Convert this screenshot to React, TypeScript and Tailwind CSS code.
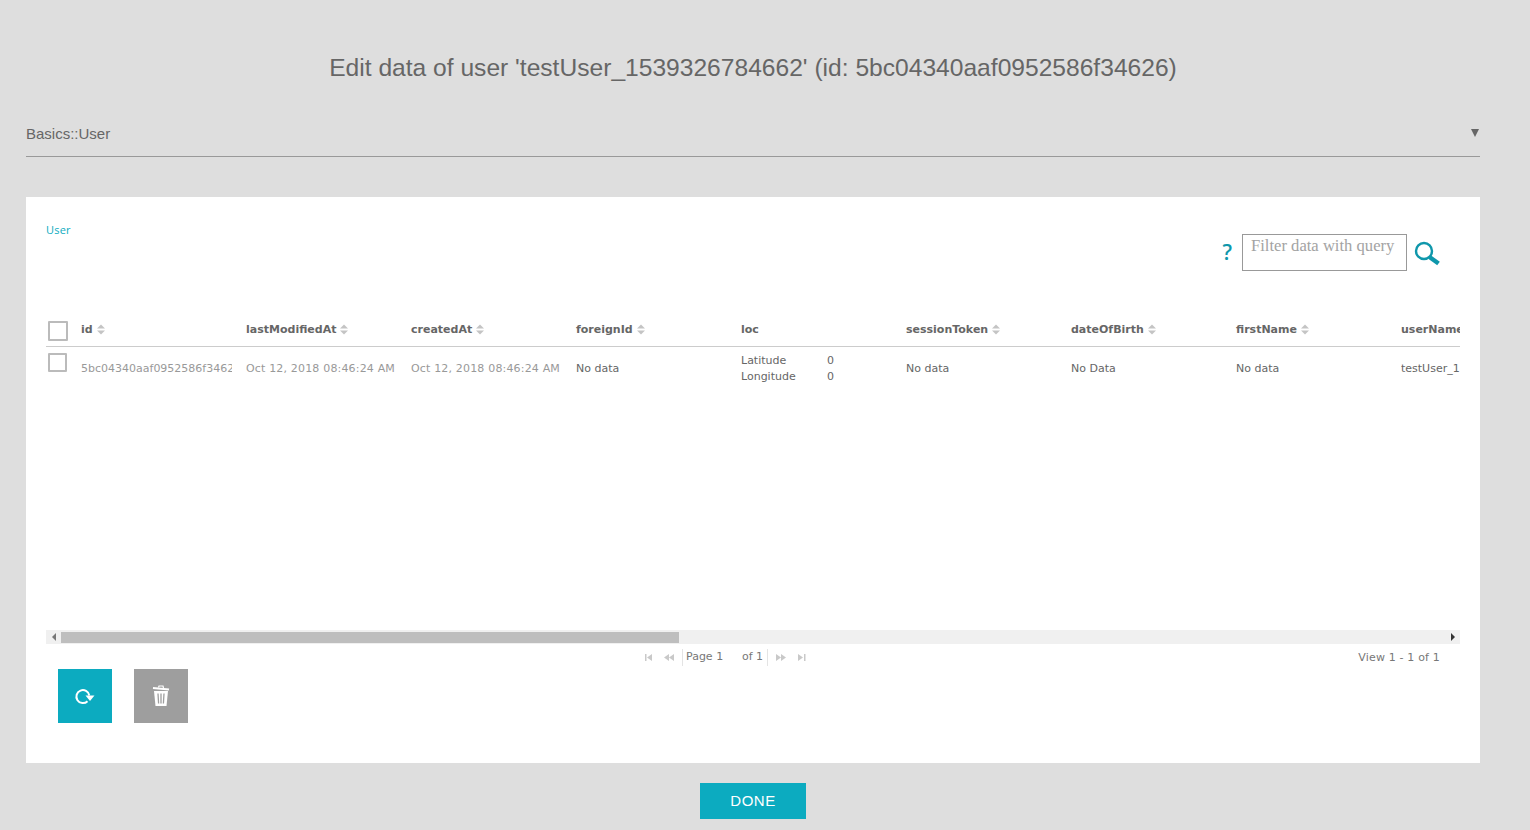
const columns = [
  { name: "id", sort: true, value: "5bc04340aaf0952586f34626", tone: "text-[#999]" },
  { name: "lastModifiedAt", sort: true, value: "Oct 12, 2018 08:46:24 AM", tone: "text-[#999] tracking-[0.17px]" },
  { name: "createdAt", sort: true, value: "Oct 12, 2018 08:46:24 AM", tone: "text-[#999] tracking-[0.17px]" },
  { name: "foreignId", sort: true, value: "No data", tone: "text-[#666]" },
  { name: "loc", sort: false, value: "", tone: "text-[#666]" },
  { name: "sessionToken", sort: true, value: "No data", tone: "text-[#666]" },
  { name: "dateOfBirth", sort: true, value: "No Data", tone: "text-[#666]" },
  { name: "firstName", sort: true, value: "No data", tone: "text-[#666]" },
  { name: "userName", sort: true, value: "testUser_1539326784662", tone: "text-[#666]" },
];

function SortIcon() {
  return (
    <svg width="8" height="11" viewBox="0 0 8 11" className="ml-[4px] shrink-0">
      <path d="M4 0.5 8 4.5H0z" fill="#c4c4c4" />
      <path d="M0 6.5h8L4 10.5z" fill="#c4c4c4" />
    </svg>
  );
}

function PagerIcon({ d }: { d: string }) {
  return (
    <svg width="11" height="7" viewBox="0 0 11 7">
      <path d={d} fill="#c9c9c9" />
    </svg>
  );
}

export default function App() {
  return (
    <div className="h-[830px] w-[1530px] overflow-hidden bg-[#dedede] pr-[50px] pl-[26px] font-['Liberation_Sans',sans-serif] text-[#666]">
      <h1 className="pt-[52px] text-center text-[24.6px] leading-[31px] font-normal">
        Edit data of user 'testUser_1539326784662' (id: 5bc04340aaf0952586f34626)
      </h1>

      <div className="mt-[16px] flex h-[58px] items-center justify-between border-b border-[#999] pt-[14px] text-[15px]">
        <span>Basics::User</span>
        <span className="mr-[1px] mb-[3px] h-0 w-0 border-x-[4px] border-t-[8px] border-x-transparent border-t-[#666]" />
      </div>

      <div className="mt-[40px] h-[566px] bg-white px-[20px]">
        <div className="flex h-[101px] items-start justify-between">
          <a className="mt-[26px] font-['Open_Sans',sans-serif] text-[11px] leading-[13px] tracking-[0.2px] text-[#0cabc0]">User</a>
          <div className="mt-[37px] mr-[20px] flex items-center">
            <span className="mr-[10px] font-['Open_Sans',sans-serif] text-[21px] leading-[21px] font-semibold text-[#0f97ab]">?</span>
            <div className="h-[37px] w-[165px] border border-[#999] pl-[8px] font-['Liberation_Serif',serif] text-[16.6px] leading-[21px] text-[#a3a3a3]">
              Filter data with query
            </div>
            <svg width="26" height="26" viewBox="0 0 26 26" className="mt-[2px] ml-[7px]">
              <circle cx="10" cy="10" r="8" fill="none" stroke="#0f97ab" strokeWidth="2.4" />
              <path d="M15.5 16 L24.5 22.5" stroke="#0f97ab" strokeWidth="4.4" />
            </svg>
          </div>
        </div>

        <div className="h-[332px] overflow-hidden font-['DejaVu_Sans',sans-serif] text-[11px]">
          <div className="flex h-[49px] w-[1600px] items-end border-b border-[#ccc]">
            <div className="mb-[5px] w-[35px] shrink-0 pl-[2px]">
              <div className="h-[20px] w-[20px] rounded-[1px] border-2 border-[#bbb]" />
            </div>
            {columns.map((c) => (
              <div key={c.name} className="mb-[8px] flex w-[165px] shrink-0 items-center font-bold text-[#666]">
                {c.name}
                {c.sort && <SortIcon />}
              </div>
            ))}
          </div>
          <div className="flex h-[44px] w-[1600px] items-center">
            <div className="mb-[13px] w-[35px] shrink-0 pl-[2px]">
              <div className="h-[19px] w-[19px] rounded-[1px] border-2 border-[#bbb]" />
            </div>
            {columns.map((c) =>
              c.name === "loc" ? (
                <div key={c.name} className="grid w-[165px] shrink-0 grid-cols-[86px_1fr] leading-[16px] text-[#666]">
                  <span>Latitude</span>
                  <span>0</span>
                  <span>Longitude</span>
                  <span>0</span>
                </div>
              ) : (
                <div key={c.name} className="w-[165px] shrink-0 pr-[14px]">
                  <div className={`overflow-hidden whitespace-nowrap ${c.tone}`}>{c.value}</div>
                </div>
              )
            )}
          </div>
        </div>

        <div className="flex h-[14px] items-center bg-[#f0f0f0]">
          <div className="flex w-[15px] justify-center">
            <div className="h-0 w-0 border-y-[4px] border-r-[4px] border-y-transparent border-r-[#777]" />
          </div>
          <div className="h-[11px] w-[618px] bg-[#bebebe]" />
          <div className="ml-auto flex w-[15px] justify-center">
            <div className="h-0 w-0 border-y-[4px] border-l-[4px] border-y-transparent border-l-[#333]" />
          </div>
        </div>

        <div className="relative font-['DejaVu_Sans',sans-serif] text-[11px] text-[#777]">
          <div className="flex h-[25px] items-center justify-end pt-[3px] pr-[20px] tracking-[0.17px]">View 1 - 1 of 1</div>
          <div className="absolute top-[5px] left-[598px] flex h-[17px] items-center">
            <div className="flex w-[38px] justify-between pr-[7px]">
              <PagerIcon d="M1 0h1.5v7H1zM3 3.5 8 0v7z" />
              <PagerIcon d="M0 3.5 5 0v7zM5 3.5 10 0v7z" />
            </div>
            <div className="h-[17px] w-[1px] bg-[#e4e4e4]" />
            <span className="ml-[3px] w-[56px]">Page 1</span>
            <span>of 1</span>
            <div className="ml-[4px] h-[17px] w-[1px] bg-[#e4e4e4]" />
            <div className="ml-[8px] flex w-[32px] justify-between">
              <PagerIcon d="M0 0l5 3.5-5 3.5zM5 0l5 3.5-5 3.5z" />
              <PagerIcon d="M1 0l5 3.5-5 3.5zM7 0h1.5v7H7z" />
            </div>
          </div>
        </div>

        <div className="ml-[12px] flex gap-[22px]">
          <button className="flex h-[54px] w-[54px] items-center justify-center bg-[#0cabc0]">
            <svg width="22" height="22" viewBox="0 0 22 22">
              <path d="M15.3 10.5A6.5 6.5 0 1 0 13.5 16.2" fill="none" stroke="white" strokeWidth="2" />
              <path d="M11.5 10.5h9l-4.500 5.500z" fill="white" />
            </svg>
          </button>
          <button className="flex h-[54px] w-[54px] items-center justify-center bg-[#9e9e9e]">
            <svg width="18" height="22" viewBox="0 0 18 22">
              <path d="M1 3 17 4.500" stroke="white" strokeWidth="2" />
              <path d="M6.500 2.500 7 1h4l.5 2" stroke="white" strokeWidth="1.2" fill="none" />
              <path d="M2 6h14l-1.500 15h-11z" fill="white" />
              <path d="M6 8.500l.6 10M9 8.500v10M12 8.500l-.6 10" stroke="#9e9e9e" strokeWidth="1.3" />
            </svg>
          </button>
        </div>
      </div>

      <div className="mt-[20px] flex justify-center">
        <button className="h-[36px] w-[106px] bg-[#0cabc0] text-[15px] tracking-[0.5px] text-white">DONE</button>
      </div>
    </div>
  );
}
